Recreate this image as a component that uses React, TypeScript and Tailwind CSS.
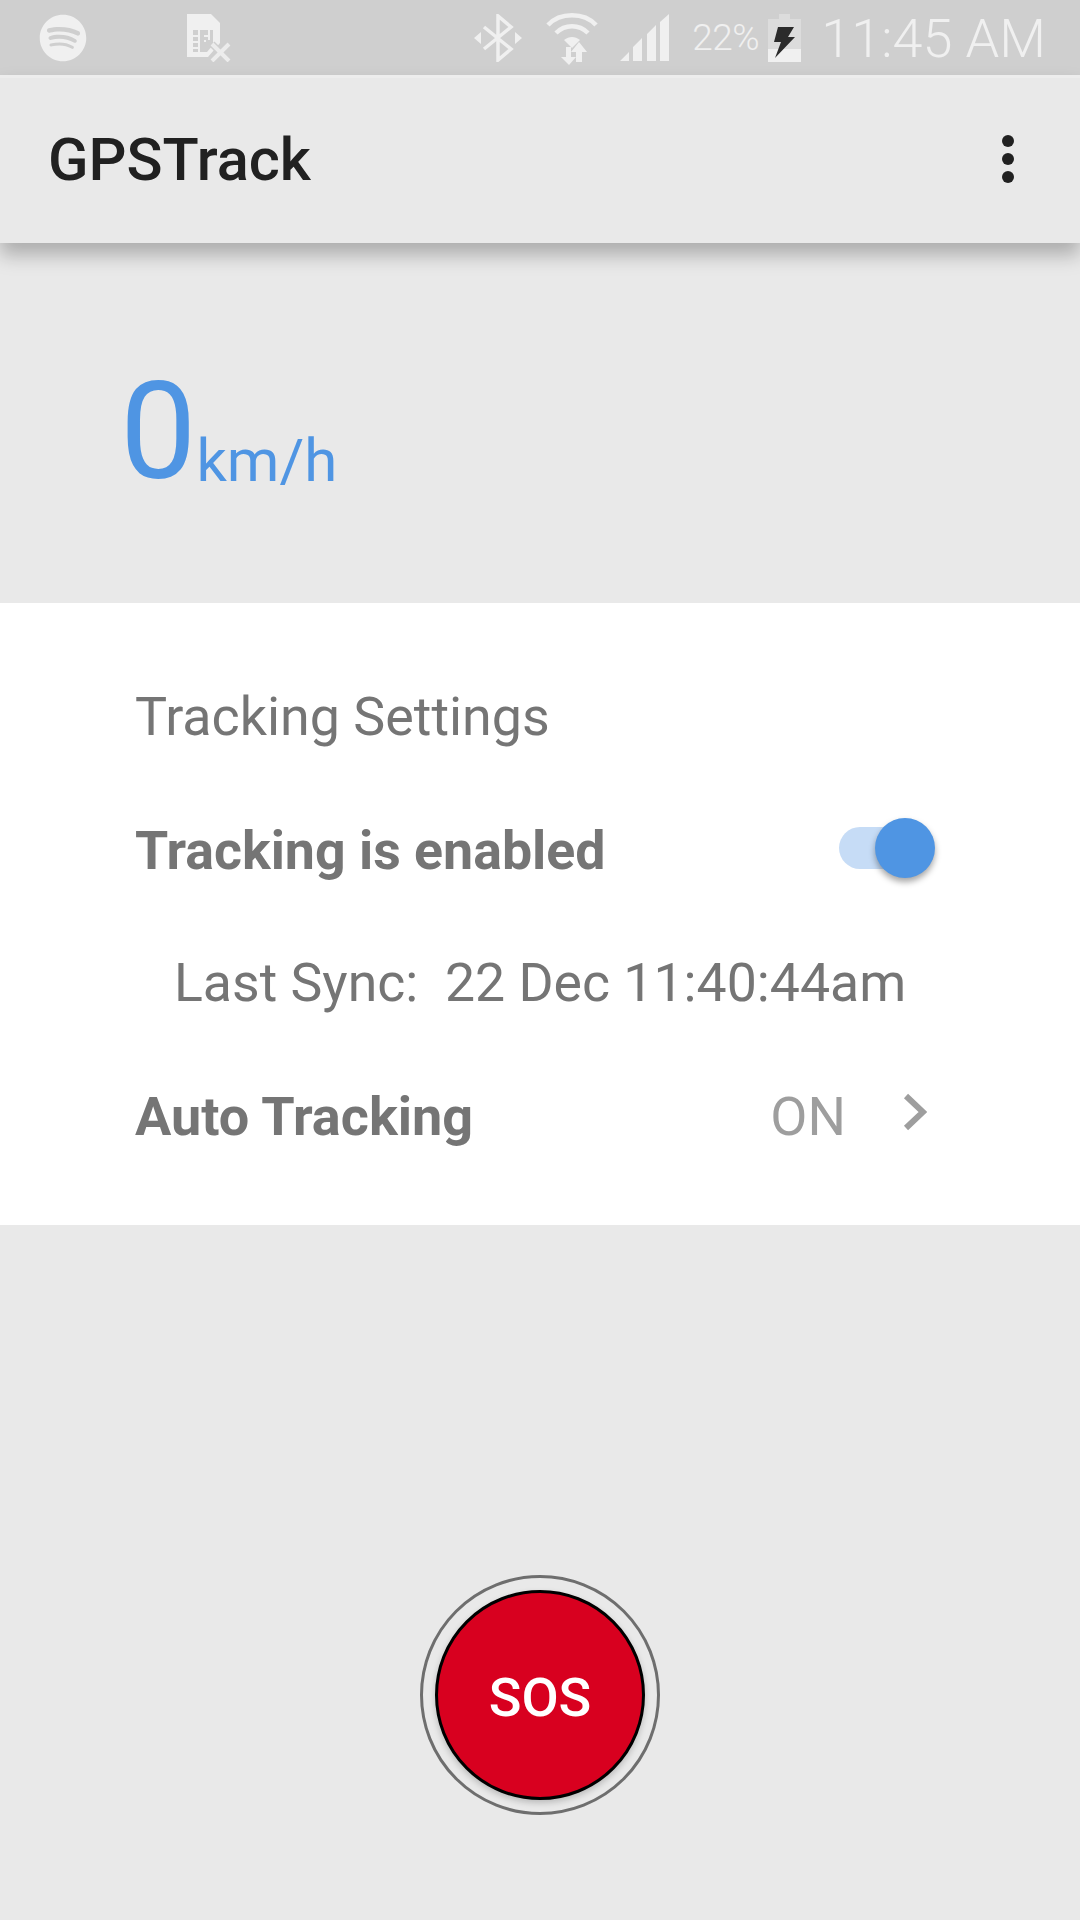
import { FaSpotify } from "react-icons/fa";

const font = { fontFamily: "Roboto, sans-serif" };

function SimOffIcon() {
  return (
    <svg width="44" height="48" viewBox="0 0 44 48" className="ml-[100px]">
      <path d="M0 0h24l9 9v20L21 43H0z" fill="#f0f0f0" />
      <path d="M6 16h20v15l-6 7H6z" fill="#cfcfcf" />
      <path d="M12 16v22M22 16v10M6 22h6M6 28h6M6 34h6M17 22h4M17 27h2" stroke="#f0f0f0" strokeWidth="2" />
      <path d="M25 30l17 17M42 30L25 47" stroke="#cfcfcf" strokeWidth="7" fill="none" />
      <path d="M25 30l17 17M42 30L25 47" stroke="#ececec" strokeWidth="4" fill="none" />
    </svg>
  );
}

function BluetoothIcon() {
  return (
    <svg width="48" height="48" viewBox="0 0 48 48">
      <path d="M10 13l27 22-13 11V2l13 11L10 35" stroke="#f0f0f0" strokeWidth="3.5" fill="none" />
      <path d="M0 24l7-6v12zM48 24l-7-6v12z" fill="#f0f0f0" />
    </svg>
  );
}

function WifiIcon() {
  return (
    <svg width="52" height="54" viewBox="0 0 52 54">
      <path d="M2 14C14 1 38 1 50 14" stroke="#f0f0f0" strokeWidth="4.5" fill="none" />
      <path d="M10 22c9-9 23-9 32 0" stroke="#f0f0f0" strokeWidth="4.5" fill="none" />
      <path d="M18 29c5-4 11-4 16 0l-8 8z" fill="#f0f0f0" />
      <path d="M20 36h5v10h5l-7 8-8-8h5zM33 31l8 10h-5v10h-6V41h-5z" fill="#f0f0f0" />
    </svg>
  );
}

function SignalIcon() {
  return (
    <svg width="49" height="48" viewBox="0 0 49 48">
      <path d="M0 47l9-9v9zM13 47V33l9-9v23zM27 47V20l9-9v36zM40 47V8l9-8v47z" fill="#f0f0f0" />
    </svg>
  );
}

function BatteryIcon() {
  return (
    <svg width="33" height="48" viewBox="0 0 33 48">
      <path d="M11 0h11v5h11v43H0V5h11z" fill="#dcdcdc" />
      <rect y="35" width="33" height="13" fill="#f0f0f0" />
      <path d="M10 13h16l-6 10h7L7 44l6-16H6z" fill="#2b2b2b" />
    </svg>
  );
}

export default function App() {
  return (
    <div className="w-[1080px] h-[1920px] bg-[#e9e9e9] flex flex-col overflow-hidden" style={font}>
      <div className="h-[75px] bg-[#cfcfcf] flex items-center pl-[39px] pr-[34px] shrink-0">
        <FaSpotify className="w-[48px] h-[48px] text-[#f0f0f0]" />
        <SimOffIcon />
        <div className="ml-auto flex items-center">
          <BluetoothIcon />
          <div className="ml-[24px]">
            <WifiIcon />
          </div>
          <div className="ml-[22px]">
            <SignalIcon />
          </div>
          <span className="ml-[23px] text-[37px] font-light text-[#f0f0f0] tracking-[-0.5px]">22%</span>
          <div className="ml-[9px]">
            <BatteryIcon />
          </div>
          <span className="ml-[20px] text-[54px] leading-none font-light text-[#f0f0f0] pt-[3px]">11:45 AM</span>
        </div>
      </div>

      <div className="h-[168px] bg-[#e9e9e9] border-t-[3px] border-[#ededed] flex items-center justify-between pl-[48px] pr-[66px] shadow-[0_12px_18px_rgba(0,0,0,0.26)] z-10 shrink-0">
        <h1 className="text-[59.5px] font-medium text-[#212121]">GPSTrack</h1>
        <div className="flex flex-col gap-[6px] mb-[3px]">
          <span className="w-[12px] h-[12px] rounded-full bg-[#212121]" />
          <span className="w-[12px] h-[12px] rounded-full bg-[#212121]" />
          <span className="w-[12px] h-[12px] rounded-full bg-[#212121]" />
        </div>
      </div>

      <div className="h-[360px] flex items-center pl-[120px] pt-[18px] text-[#4f95e3] shrink-0">
        <span className="text-[136px] leading-none">0</span>
        <span className="text-[60px] leading-none self-end mb-[112px]">km/h</span>
      </div>

      <div className="h-[622px] bg-white shrink-0 pl-[135px] pr-[150px] pt-[78px] flex flex-col text-[#757575]">
        <div className="h-[72px] flex items-center text-[53.8px] leading-none">Tracking Settings</div>
        <div className="h-[133px] mt-[28px] flex items-center justify-between">
          <span className="text-[53.7px] font-bold pt-[7px]">Tracking is enabled</span>
          <div className="relative w-[86px] h-[42px] rounded-full bg-[#c6dcf6] mr-[5px]">
            <span className="absolute right-[-10px] top-[-9px] w-[60px] h-[60px] rounded-full bg-[#4f95e3] shadow-[0_4px_6px_rgba(0,0,0,0.35)]" />
          </div>
        </div>
        <div className="h-[133px] flex items-center pl-[39px] pt-[6px] text-[53.6px] whitespace-pre">Last Sync:  22 Dec 11:40:44am</div>
        <div className="h-[133px] flex items-center justify-between pt-[6px]">
          <span className="text-[54px] font-bold">Auto Tracking</span>
          <div className="flex items-center">
            <span className="text-[54px] text-[#9e9e9e]">ON</span>
            <svg width="24" height="38" viewBox="0 0 24 38" className="ml-[57px] mr-[3px] mb-[9px]">
              <path d="M3 3l17 16L3 35" stroke="#9e9e9e" strokeWidth="6" fill="none" />
            </svg>
          </div>
        </div>
      </div>

      <div className="flex-1 flex justify-center pt-[350px]">
        <div className="w-[240px] h-[240px] rounded-full border-[3px] border-[#6e6e6e] flex items-center justify-center">
          <button className="w-[210px] h-[210px] rounded-full bg-[#d8001f] border-[3px] border-black text-white text-[54px] font-medium pt-[4px] shadow-[0_3px_6px_rgba(0,0,0,0.2)]">
            SOS
          </button>
        </div>
      </div>
    </div>
  );
}
